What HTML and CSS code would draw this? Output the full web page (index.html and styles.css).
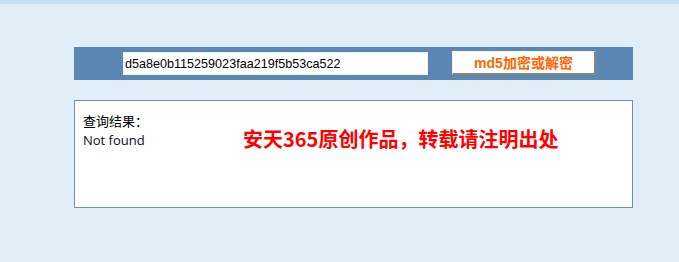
FILE: index.html
```html
<!DOCTYPE html>
<html>
<head>
<meta charset="utf-8">
<link rel="stylesheet" href="styles.css">
</head>
<body>
<div class="topband"></div>
<div class="wrap">
  <form class="bar">
    <input class="hash" type="text" value="d5a8e0b115259023faa219f5b53ca522">
    <button class="btn" type="button">md5加密或解密</button>
  </form>
  <div class="result">
    <div class="left">
      <div class="label">查询结果：</div>
      <div class="value">Not found</div>
    </div>
    <div class="notice">安天365原创作品，转载请注明出处</div>
  </div>
</div>
</body>
</html>
```
FILE: styles.css
```css
html, body {
  margin: 0;
  padding: 0;
  background: #e1eef8;
  height: 100%;
}
body {
  font-family: "Liberation Sans", Arial, "Noto Sans CJK SC", sans-serif;
}
.topband {
  height: 4px;
  background: #c6dff0;
}
.wrap {
  width: 559px;
  margin: 43px 0 0 74px;
}
.bar {
  margin: 0;
  height: 33px;
  background: #5b87b4;
  display: flex;
  align-items: flex-start;
  box-sizing: border-box;
}
.hash {
  margin: 5px 0 0 49px;
  width: 305px;
  height: 23px;
  box-sizing: border-box;
  border: 1px solid #f2f2f2;
  background: #fff;
  padding: 0 0 0 1px;
  font-family: "Liberation Sans", Arial, sans-serif;
  font-size: 12.6px;
  color: #000;
  outline: none;
}
.btn {
  margin: 4px 0 0 24px;
  width: 144px;
  height: 24px;
  box-sizing: border-box;
  background: #fff;
  border-style: solid;
  border-width: 1px 2px 2px 1px;
  border-color: #f4f4f4 #8a8474 #8a8474 #f4f4f4;
  padding: 0;
  font-family: "Liberation Sans", Arial, "Noto Sans CJK SC", sans-serif;
  font-weight: bold;
  font-size: 14px;
  color: #ff6600;
  line-height: 20px;
}
.result {
  margin-top: 20px;
  height: 108px;
  box-sizing: border-box;
  border: 1px solid #6a8ec8;
  background: #fff;
  display: flex;
  align-items: flex-start;
}
.left {
  padding: 10px 0 0 8px;
  width: 160px;
  color: #000;
}
.label {
  font-family: "Noto Sans CJK SC", sans-serif;
  font-size: 13px;
  line-height: 20px;
}
.value {
  font-family: "Open Sans", "Liberation Sans", sans-serif;
  font-size: 13px;
  line-height: 18px;
  color: #0a0a20;
}
.notice {
  margin: 26px 0 0 0;
  font-family: "Noto Sans CJK SC", sans-serif;
  font-weight: bold;
  font-size: 20px;
  line-height: 24px;
  color: #ff0000;
}
```
